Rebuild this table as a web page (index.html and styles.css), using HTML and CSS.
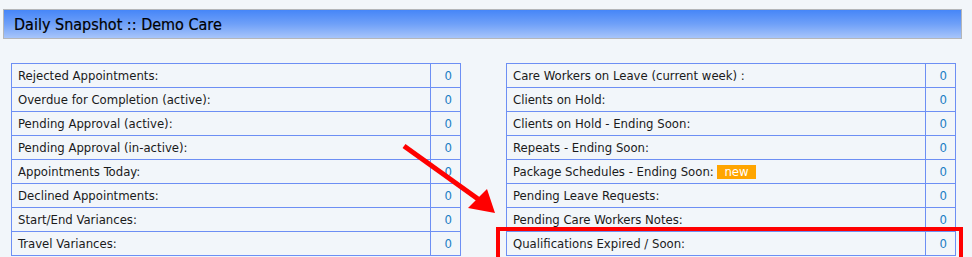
FILE: index.html
```html
<!DOCTYPE html>
<html lang="en">
<head>
<meta charset="utf-8">
<title>Daily Snapshot</title>
<link rel="stylesheet" href="styles.css">
</head>
<body>
<div class="page">
  <div class="title-bar">Daily Snapshot :: Demo Care</div>

  <div class="panels">
    <table class="stats">
      <tr><td class="label">Rejected Appointments:</td><td class="num">0</td></tr>
      <tr><td class="label">Overdue for Completion (active):</td><td class="num">0</td></tr>
      <tr><td class="label">Pending Approval (active):</td><td class="num">0</td></tr>
      <tr><td class="label">Pending Approval (in-active):</td><td class="num">0</td></tr>
      <tr><td class="label">Appointments Today:</td><td class="num">0</td></tr>
      <tr><td class="label">Declined Appointments:</td><td class="num">0</td></tr>
      <tr><td class="label">Start/End Variances:</td><td class="num">0</td></tr>
      <tr><td class="label">Travel Variances:</td><td class="num">0</td></tr>
    </table>

    <table class="stats">
      <tr><td class="label">Care Workers on Leave (current week) :</td><td class="num">0</td></tr>
      <tr><td class="label">Clients on Hold:</td><td class="num">0</td></tr>
      <tr><td class="label">Clients on Hold - Ending Soon:</td><td class="num">0</td></tr>
      <tr><td class="label">Repeats - Ending Soon:</td><td class="num">0</td></tr>
      <tr><td class="label">Package Schedules - Ending Soon: <span class="badge">new</span></td><td class="num">0</td></tr>
      <tr><td class="label">Pending Leave Requests:</td><td class="num">0</td></tr>
      <tr><td class="label">Pending Care Workers Notes:</td><td class="num">0</td></tr>
      <tr class="flagged"><td class="label">Qualifications Expired / Soon:</td><td class="num">0</td></tr>
    </table>
  </div>

  <!-- annotation: arrow pointing at the flagged row, plus a frame round it -->
  <svg class="pointer" width="972" height="257" viewBox="0 0 972 257">
    <line x1="404" y1="146" x2="478" y2="199" stroke="#ff0000" stroke-width="5"/>
    <polygon points="495,213 468,208 487,189" fill="#ff0000"/>
  </svg>
  <div class="frame"></div>
</div>
</body>
</html>
```
FILE: styles.css
```css
html, body {
  margin: 0;
  padding: 0;
  background: #f2f6fa;
}

body {
  font-family: "DejaVu Sans Condensed", "DejaVu Sans", sans-serif;
  color: #1a1a1a;
  overflow: hidden;
}

.page {
  position: relative;
  width: 972px;
  height: 257px;
  padding-top: 9px;
  box-sizing: border-box;
}

.title-bar {
  margin: 0 10px 0 3px;
  height: 30px;
  box-sizing: border-box;
  border: 1px solid #b4b6b9;
  background: linear-gradient(to bottom, #4686f8 0%, #6fa0f8 50%, #a7c5fa 100%);
  font-size: 16px;
  line-height: 28px;
  padding: 1px 0 0 10px;
  color: #000;
  -webkit-text-stroke: 0.2px #000;
}

.panels {
  display: grid;
  grid-template-columns: 450px 450px;
  column-gap: 45px;
  padding-left: 11px;
  margin-top: 24px;
}

.stats {
  border-collapse: collapse;
  width: 450px;
  font-size: 13px;
}

.stats td {
  border: 1px solid #6d8ff4;
  height: 24px;
  padding: 0 0 0 6px;
  box-sizing: border-box;
  line-height: 15px;
  white-space: nowrap;
}

.stats td.num {
  width: 30px;
  text-align: right;
  padding: 0 8px 0 0;
  color: #1a7dc4;
}

.badge {
  display: inline-block;
  background: #ffa500;
  color: #fff;
  padding: 0 7px;
  line-height: 14px;
  height: 14px;
}

.pointer {
  position: absolute;
  left: 0;
  top: 0;
  pointer-events: none;
}

.frame {
  position: absolute;
  left: 496px;
  top: 227px;
  width: 467px;
  height: 34px;
  box-sizing: border-box;
  border: 4px solid #ff0000;
}
```
